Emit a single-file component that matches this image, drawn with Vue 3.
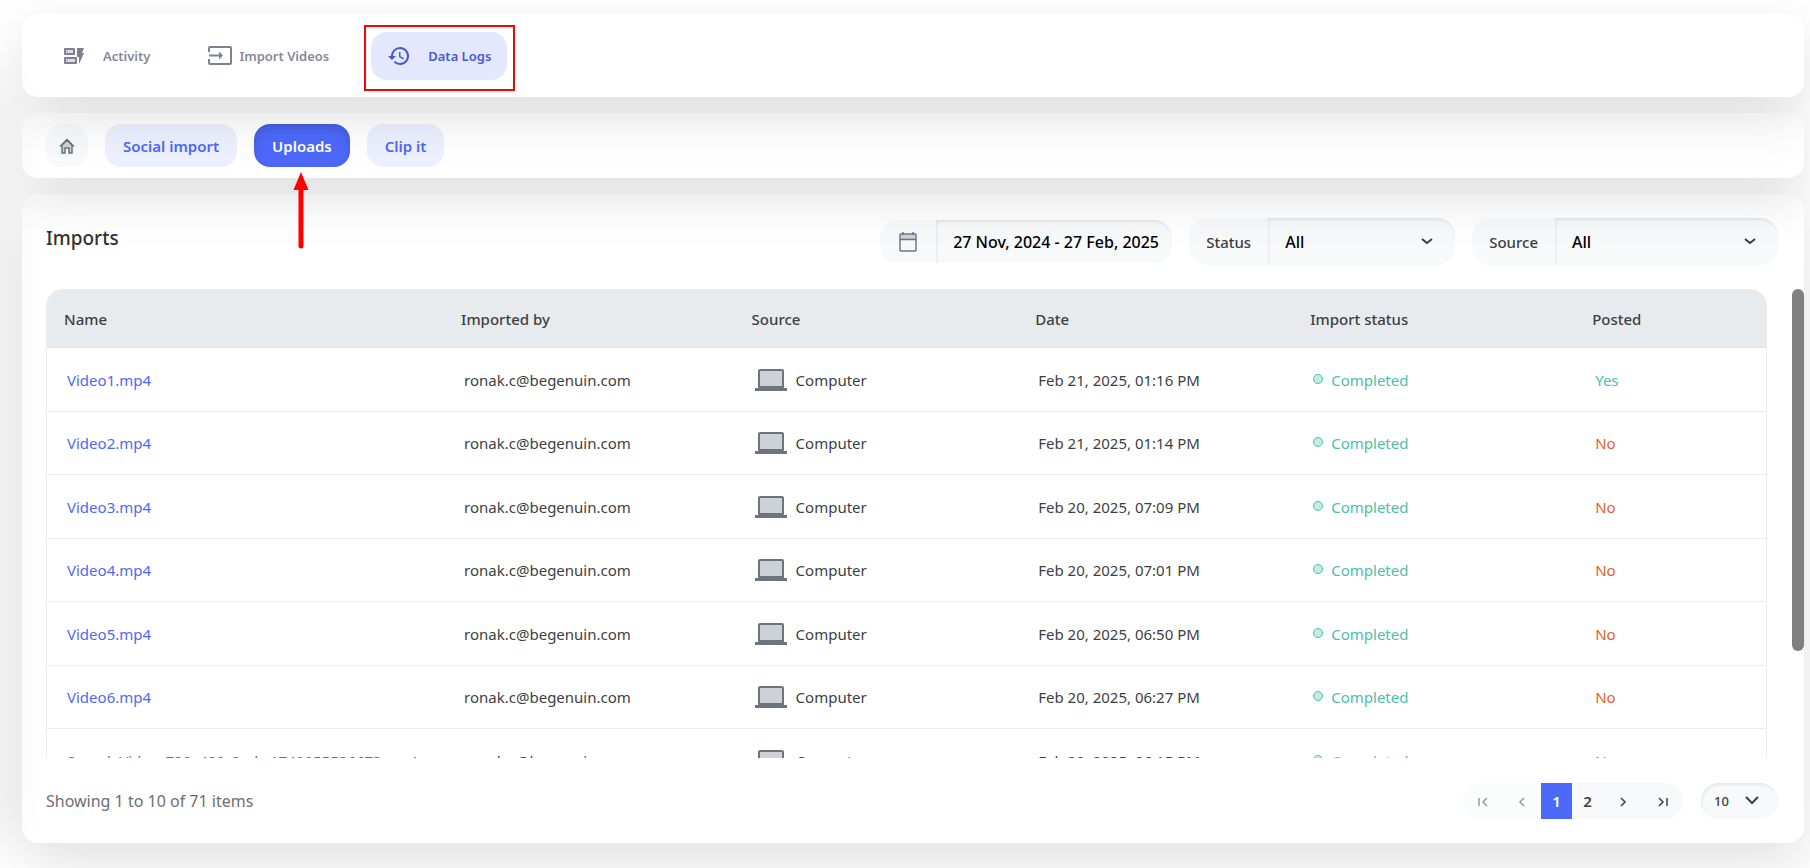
<!--
  App.vue — data logs page, uploads tab
-->

<template>
  <div class="page">
    <!-- main tabs -->
    <nav class="card main-nav">
      <a href="#" class="nav-item activity">
        <svg width="24" height="24" viewBox="0 0 24 24">
          <rect x="2" y="4" width="11" height="7" rx="1" fill="#7d7f93" />
          <rect x="4" y="6" width="7" height="3" fill="#dcdce2" />
          <rect x="5" y="7" width="1" height="1" fill="#7d7f93" />
          <rect x="2" y="13" width="13" height="7" rx="1" fill="#7d7f93" />
          <rect x="4" y="15" width="9" height="3" fill="#dcdce2" />
          <rect x="5" y="16" width="1" height="1" fill="#7d7f93" />
          <path d="M15 4h7l-2 5h2l-5 11v-7h-2z" fill="#7d7f93" />
        </svg>
        Activity
      </a>
      <a href="#" class="nav-item import">
        <svg width="24" height="24" viewBox="0 0 24 24" fill="none" stroke="#7d7f93" stroke-width="2">
          <path d="M1 8V4q0-1 1-1h20q1 0 1 1v15q0 1-1 1H2q-1 0-1-1v-4" />
          <path d="M1 11.500h12" />
          <path d="M11 7.500l4 4-4 4z" fill="#7d7f93" stroke="none" />
        </svg>
        Import Videos
      </a>
      <a href="#" class="nav-item logs active">
        <svg width="24" height="24" viewBox="0 0 24 24" fill="#4658d8">
          <path d="M13 3a9 9 0 0 0-9 9H1l3.890 3.890.070.140L9 12H6a7 7 0 1 1 7 7 6.900 6.900 0 0 1-4.940-2.060l-1.420 1.420A9 9 0 1 0 13 3zm-1 5v5l4.280 2.540.720-1.210-3.500-2.080V8H12z" />
        </svg>
        Data Logs
        <span class="highlight"></span>
      </a>
    </nav>

    <!-- sub tabs -->
    <nav class="card sub-nav">
      <button type="button" class="pill home" aria-label="Home">
        <svg width="18" height="18" viewBox="0 0 18 18" fill="none" stroke="#6c757d" stroke-width="2">
          <path d="M4 8l5-5 5 5v8h-3v-5H7v5H4z" fill="#ced2d6" stroke-width="1.500" />
          <path d="M2 9.500l7-7 7 7" stroke-width="1.500" />
        </svg>
      </button>
      <button
        v-for="tab in tabs"
        :key="tab"
        type="button"
        class="pill"
        :class="{ active: tab === currentTab }"
        @click="currentTab = tab"
      >
        {{ tab }}
        <svg v-if="tab === 'Uploads'" class="pointer" width="16" height="78" viewBox="0 0 16 78">
          <path d="M8 14v60" stroke="#f00" stroke-width="5" stroke-linecap="round" />
          <path d="M8 0l7.500 18h-15z" fill="#f00" />
        </svg>
      </button>
    </nav>

    <!-- imports list -->
    <main class="card imports">
      <header class="toolbar">
        <h1>Imports</h1>
        <div class="filters">
          <div class="filter date">
            <label for="range" aria-label="Date range">
              <svg width="22" height="22" viewBox="0 0 22 22" fill="none" stroke="#6c757d" stroke-width="2">
                <rect x="3" y="3" width="16" height="17" rx="1" stroke-width="1.500" />
                <path d="M4 4h14v4H4z" fill="#ced2d6" stroke="none" />
                <path d="M3 8.500h16M6 1v3M16 1v3" stroke-width="1.500" />
              </svg>
            </label>
            <input id="range" type="text" v-model="range" />
          </div>
          <div class="filter status">
            <label for="status">Status</label>
            <select id="status"><option>All</option></select>
            <svg class="chevron" width="12" height="12" viewBox="0 0 12 12"><path d="M1 4l5 4 5-4" /></svg>
          </div>
          <div class="filter source">
            <label for="source">Source</label>
            <select id="source"><option>All</option></select>
            <svg class="chevron" width="12" height="12" viewBox="0 0 12 12"><path d="M1 4l5 4 5-4" /></svg>
          </div>
        </div>
      </header>

      <div class="list">
        <div class="table-wrap">
          <table>
            <thead>
              <tr>
                <th v-for="col in columns" :key="col">{{ col }}</th>
              </tr>
            </thead>
            <tbody>
              <tr v-for="row in rows" :key="row.name">
                <td><a href="#">{{ row.name }}</a></td>
                <td>ronak.c@begenuin.com</td>
                <td>
                  <span class="with-icon">
                    <svg width="32" height="24" viewBox="0 0 32 24">
                      <rect x="4" y="2" width="24" height="18" rx="1" fill="#ced2d6" stroke="#6c757d" stroke-width="2" />
                      <path d="M4 18h24v2h4v3H0v-3h4z" fill="#6c757d" />
                    </svg>
                    Computer
                  </span>
                </td>
                <td>{{ row.date }}</td>
                <td class="green"><span class="dot"></span>Completed</td>
                <td :class="row.posted ? 'green' : 'red'">{{ row.posted ? 'Yes' : 'No' }}</td>
              </tr>
            </tbody>
          </table>
        </div>
        <div class="scrollbar"></div>
      </div>

      <footer class="footer">
        <p>Showing 1 to 10 of 71 items</p>
        <div class="paging">
          <div class="pages">
            <button type="button" class="step" disabled aria-label="First page">
              <svg width="12" height="12" viewBox="0 0 12 12"><path d="M2 3v8M10 3L6 7l4 4" /></svg>
            </button>
            <button type="button" class="step" disabled aria-label="Previous page">
              <svg width="12" height="12" viewBox="0 0 12 12"><path d="M8 3L4 7l4 4" /></svg>
            </button>
            <button type="button" class="current">1</button>
            <button type="button">2</button>
            <button type="button" class="step" aria-label="Next page">
              <svg width="12" height="12" viewBox="0 0 12 12"><path d="M4 3l4 4-4 4" /></svg>
            </button>
            <button type="button" class="step" aria-label="Last page">
              <svg width="12" height="12" viewBox="0 0 12 12"><path d="M2 3l4 4-4 4M10 3v8" /></svg>
            </button>
          </div>
          <div class="page-size">
            <select aria-label="Items per page"><option>10</option></select>
            <svg class="chevron" width="16" height="16" viewBox="0 0 16 16"><path d="M2 5l6 6 6-6" /></svg>
          </div>
        </div>
      </footer>
    </main>
  </div>
</template>

<script setup>
import { ref } from 'vue'

const tabs = ['Social import', 'Uploads', 'Clip it']
const currentTab = ref('Uploads')
const range = ref('27 Nov, 2024 - 27 Feb, 2025')

const columns = ['Name', 'Imported by', 'Source', 'Date', 'Import status', 'Posted']

const rows = [
  { name: 'Video1.mp4', date: 'Feb 21, 2025, 01:16 PM', posted: true },
  { name: 'Video2.mp4', date: 'Feb 21, 2025, 01:14 PM', posted: false },
  { name: 'Video3.mp4', date: 'Feb 20, 2025, 07:09 PM', posted: false },
  { name: 'Video4.mp4', date: 'Feb 20, 2025, 07:01 PM', posted: false },
  { name: 'Video5.mp4', date: 'Feb 20, 2025, 06:50 PM', posted: false },
  { name: 'Video6.mp4', date: 'Feb 20, 2025, 06:27 PM', posted: false },
  { name: 'SampleVideo_720x480_2mb_1740055536673.mp4', date: 'Feb 20, 2025, 06:15 PM', posted: false }
]
</script>

<style>
body {
  background: #fff;
}
</style>

<style scoped>
.page {
  position: relative;
  display: flex;
  flex-direction: column;
  gap: 16px;
  min-height: 100vh;
  box-sizing: border-box;
  padding: 14px 6px 24px 22px;
  overflow: hidden;
  font-family: 'Segoe UI', 'Noto Sans', 'Open Sans', sans-serif;
  font-size: 15px;
  color: #3c3f43;
}

/* soft shade that falls in from the left edge */
.page::before {
  content: '';
  position: absolute;
  z-index: 4;
  top: 80px;
  bottom: 30px;
  left: -40px;
  width: 40px;
  box-shadow: 0 0 48px rgba(0, 0, 0, 0.09);
  pointer-events: none;
}

a {
  text-decoration: none;
}

button,
input,
select {
  font: inherit;
  color: inherit;
  border: 0;
  margin: 0;
  padding: 0;
  background: none;
}

/* ---------- cards ---------- */
.card {
  position: relative;
  box-sizing: border-box;
  background: #fff;
  border-radius: 16px;
  box-shadow: 0 20px 54px rgba(0, 0, 0, 0.12);
}

/* ---------- main tabs ---------- */
.main-nav {
  z-index: 3;
  display: flex;
  padding: 18px 24px 17px;
}

.nav-item {
  position: relative;
  display: flex;
  align-items: center;
  box-sizing: border-box;
  height: 48px;
  padding: 0 16px;
  border-radius: 16px;
  font-size: 13px;
  font-weight: 600;
  color: #85879a;
}

.activity {
  gap: 17px;
  margin-right: 26px;
}

.import {
  gap: 7px;
  margin-right: 26px;
}

.logs {
  gap: 17px;
}

.nav-item.active {
  background: #e4e8fe;
  color: #4658d8;
}

.highlight {
  position: absolute;
  inset: -7px -8px -11px -7px;
  border: 2px solid #f00;
}

/* ---------- sub tabs ---------- */
.sub-nav {
  z-index: 2;
  display: flex;
  gap: 17px;
  padding: 11px 24px;
}

.pill {
  position: relative;
  height: 43px;
  padding: 0 18px;
  border-radius: 16px;
  background: #edf0ff;
  font-weight: 600;
  color: #4d69fa;
}

.pill.home {
  display: flex;
  align-items: center;
  justify-content: center;
  width: 42px;
  padding: 0;
  background: #f8f9fb;
}

.pill.active {
  background: #4d69fa;
  color: #fff;
  box-shadow: inset 0 4px 8px rgba(0, 0, 0, 0.12);
}

.pointer {
  position: absolute;
  top: 48px;
  left: calc(50% - 9px);
}

/* ---------- toolbar ---------- */
.imports {
  z-index: 1;
  padding: 24px 0 24px 24px;
}

.toolbar {
  display: flex;
  justify-content: space-between;
  padding-right: 26px;
}

h1 {
  margin: 7px 0 0;
  font-size: 19px;
  line-height: 26px;
  font-weight: 500;
  color: #2f3133;
}

.filters {
  display: flex;
  align-items: center;
  gap: 17px;
}

.filter {
  position: relative;
  display: flex;
  height: 47px;
  border-radius: 18px;
  background: #f8f9fb;
  font-weight: 500;
}

.filter.date {
  height: 43px;
}

.filter label {
  display: flex;
  align-items: center;
  padding: 0 17px;
}

.filter input,
.filter select,
.page-size select {
  box-sizing: border-box;
  appearance: none;
  padding-left: 17px;
  border-radius: 0 18px 18px 0;
  box-shadow: inset 1px 2px 3px rgba(0, 0, 0, 0.08);
  color: #000;
}

.filter input,
.filter select {
  font-size: 16px;
}

.date input {
  width: 236px;
}

.status select {
  width: 187px;
}

.source select {
  width: 223px;
}

.chevron {
  position: absolute;
  right: 22px;
  top: 17px;
  pointer-events: none;
}

svg.chevron path,
.step path {
  fill: none;
  stroke: currentColor;
  stroke-width: 2;
}

.step path {
  stroke-width: 1.5;
}

/* ---------- table ---------- */
.list {
  display: flex;
  justify-content: space-between;
  gap: 25px;
  height: 469px;
  margin-top: 24px;
  overflow: hidden;
}

.table-wrap {
  flex: 1;
}

table {
  width: 100%;
  table-layout: fixed;
  border: 1px solid #ebeced;
  border-radius: 16px;
  border-spacing: 0;
  overflow: hidden;
}

th {
  height: 58px;
  box-sizing: border-box;
  padding: 0 0 0 17px;
  border-bottom: 1px solid #e2e4e6;
  background: #e8ebee;
  text-align: left;
  font-weight: 500;
}

th:nth-child(1) { width: 23.1%; }
th:nth-child(2) { width: 16.9%; }
th:nth-child(3) { width: 16.5%; }
th:nth-child(4) { width: 16%; }
th:nth-child(5) { width: 16.4%; }

td {
  height: 64px;
  box-sizing: border-box;
  padding: 0 0 0 20px;
  border-bottom: 1px solid #ebeced;
  white-space: nowrap;
}

tr:nth-child(even) td {
  height: 63px;
}

td a {
  color: #4d69fa;
}

.with-icon {
  display: flex;
  align-items: center;
  gap: 9px;
}

.green {
  color: #4bc0a9;
}

.red {
  color: #f15a2b;
}

.dot {
  display: inline-block;
  box-sizing: border-box;
  width: 10px;
  height: 10px;
  margin-right: 8px;
  border: 1px solid #4bc0a9;
  border-radius: 50%;
  background: #c6e9e2;
  vertical-align: 2px;
}

.scrollbar {
  width: 12px;
  height: 362px;
  border-radius: 6px;
  background: #808080;
}

/* ---------- footer ---------- */
.footer {
  display: flex;
  align-items: center;
  justify-content: space-between;
  padding: 25px 26px 0 0;
}

.footer p {
  margin: 0;
  font-size: 16px;
  color: #6d6f71;
}

.paging {
  display: flex;
  gap: 18px;
}

.pages {
  display: flex;
  height: 36px;
  border-radius: 18px;
  overflow: hidden;
  background: #f8f9fb;
  font-weight: 600;
}

.pages button {
  width: 31px;
  padding: 0;
}

.pages .step {
  width: 40px;
}

.pages .step:disabled {
  width: 39px;
  background: #fbfcfc;
  color: #999;
}

.pages .current {
  background: #4d69fa;
  color: #fff;
}

.page-size {
  position: relative;
  display: flex;
}

.page-size select {
  width: 77px;
  height: 36px;
  padding-left: 13px;
  border-radius: 18px;
  background: #f8f9fb;
  font-size: 13px;
  font-weight: 500;
  color: #3c3f43;
}

.page-size .chevron {
  right: 18px;
  top: 9px;
}
</style>
